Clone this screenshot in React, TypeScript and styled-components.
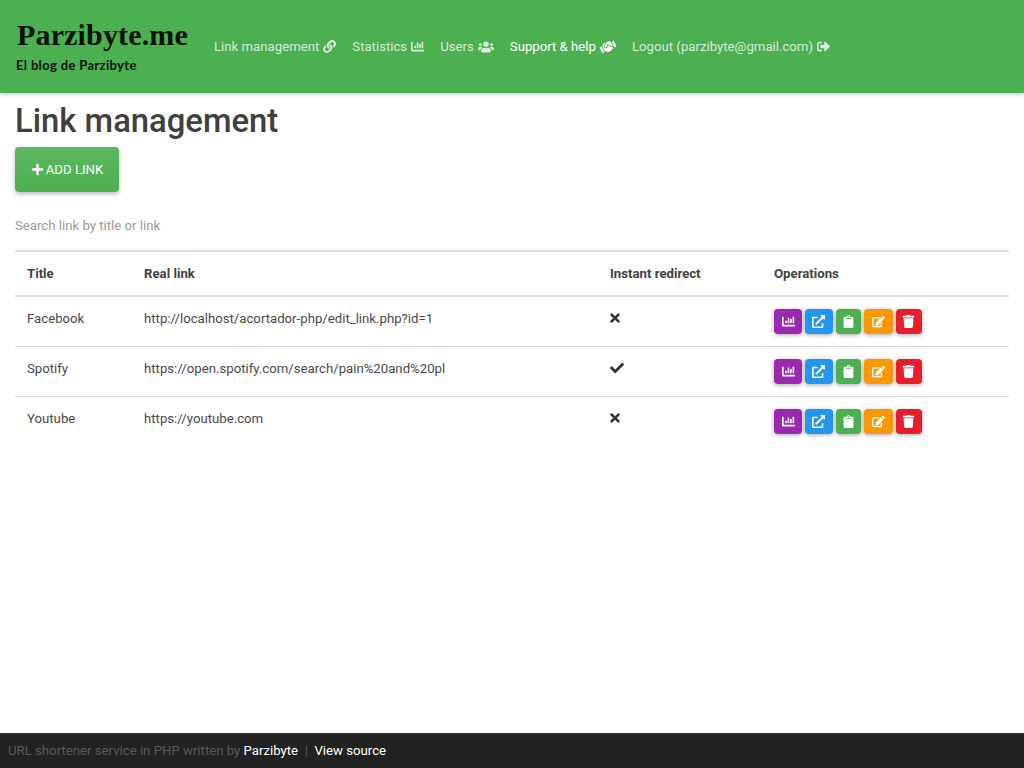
import React from "react";
import styled, { createGlobalStyle } from "styled-components";
import { FaLink, FaChartBar, FaUsers, FaHandshake, FaSignOutAlt, FaPlus, FaTimes, FaCheck, FaExternalLinkAlt, FaClipboard, FaEdit, FaTrash } from "react-icons/fa";

const Global = createGlobalStyle`
  html, body { margin: 0; padding: 0; background: #fff; }
  body { font-family: Roboto, "Liberation Sans", sans-serif; font-size: 13.2px; color: #333; }
  #root { min-height: 768px; }
`;
const Page = styled.div`
  height: 768px;
  display: flex;
  flex-direction: column;
  overflow: hidden;
`;
const Header = styled.header`
  height: 93px;
  flex: none;
  background: #4caf50;
  box-shadow: 0 1px 4px rgba(0,0,0,.25);
  display: flex;
  align-items: center;
  padding-left: 17px;
  position: relative;
`;
const Brand = styled.div`
  width: 189px;
  flex: none;
  display: flex;
  flex-direction: column;
  color: #0a120a;
  margin-top: -1px;
`;
const BrandName = styled.div`
  font-family: "Liberation Serif", serif;
  font-weight: 700;
  font-size: 30px;
  line-height: 34px;
  letter-spacing: 0.15px;
  white-space: nowrap;
`;
const Tagline = styled.div`
  font-family: "Lato", sans-serif;
  font-weight: 700;
  font-size: 13px;
  line-height: 18px;
  margin-top: 4px;
  margin-left: -1px;
  letter-spacing: .35px;
`;
const Nav = styled.nav`
  display: flex;
  align-items: center;
  gap: 16px;
  margin-left: 8px;
`;
const NavItem = styled.a<{ $active?: boolean }>`
  display: inline-flex;
  align-items: center;
  gap: 4px;
  white-space: nowrap;
  font-size: 13.2px;
  color: ${p => (p.$active ? "#fff" : "rgba(255,255,255,.78)")};
  svg { font-size: 13px; }
`;
const UsersIcon = styled(FaUsers)`
  && { font-size: 16px; }
`;
const HandIcon = styled(FaHandshake)`
  && { font-size: 16px; }
  transform: rotate(-25deg);
`;
const Main = styled.main`
  flex: 1;
  padding: 0 15px;
`;
const Title = styled.h1`
  margin: 8px 0 0;
  font-size: 32.8px;
  font-weight: 500;
  line-height: 40px;
  color: #404040;
`;
const AddButton = styled.button`
  margin-top: 6px;
  width: 104px;
  height: 45px;
  display: flex;
  align-items: center;
  justify-content: center;
  gap: 2px;
  border: 0;
  border-radius: 4px;
  background: linear-gradient(#5cb860, #4caf50);
  box-shadow: 0 2px 5px rgba(0,0,0,.28);
  color: #fff;
  font-family: inherit;
  font-size: 13.2px;
  padding: 0;
  svg { font-size: 13px; }
`;
const SearchRow = styled.div`
  height: 60px;
  display: flex;
  align-items: center;
  font-size: 13.2px;
  color: #9a9a9a;
  padding-top: 8px;
  box-sizing: border-box;
  border-bottom: 2px solid #ddd;
`;
const Table = styled.table`
  width: 994px;
  border-collapse: collapse;
  table-layout: fixed;
`;
const Th = styled.th<{ $w: number }>`
  width: ${p => p.$w}px;
  box-sizing: border-box;
  height: 44px;
  padding: 0 12px;
  text-align: left;
  font-weight: 700;
  font-size: 13.2px;
  color: #424242;
  border-bottom: 2px solid #ddd;
`;
const Row = styled.tr`
  height: 50px;
  border-bottom: 1px solid #ddd;
  &:last-child { border-bottom: 0; }
`;
const Td = styled.td`
  padding: 12px 12px 0;
  vertical-align: top;
  font-size: 13.2px;
  line-height: 20px;
  color: #4a4a4a;
`;
const Mark = styled.span`
  display: flex;
  color: #333;
  font-size: 14px;
  height: 18px;
  align-items: center;
`;
const CrossIcon = styled(FaTimes)`
  margin-left: -2px;
`;
const Ops = styled.div`
  display: flex;
  gap: 3px;
`;
const Op = styled.button<{ $bg: string; $w: number }>`
  width: ${p => p.$w}px;
  height: 25px;
  border: 0;
  padding: 0;
  border-radius: 4px;
  background: ${p => p.$bg};
  color: #fff;
  display: flex;
  align-items: center;
  justify-content: center;
  font-size: 13px;
  box-shadow: 0 1px 4px rgba(0,0,0,.35);
`;
const Footer = styled.footer`
  height: 35px;
  flex: none;
  background: #222;
  border-top: 1px solid #333;
  box-sizing: border-box;
  display: flex;
  align-items: center;
  padding: 0 0 2px 8px;
  font-size: 13.2px;
  color: #5a5a5a;
  white-space: pre;
`;
const FooterLink = styled.a`
  color: #fff;
`;

const rows = [
  ["Facebook", "http://localhost/acortador-php/edit_link.php?id=1", false],
  ["Spotify", "https://open.spotify.com/search/pain%20and%20pl", true],
  ["Youtube", "https://youtube.com", false],
] as const;

export default function App() {
  return (
    <Page>
      <Global />
      <Header>
        <Brand>
          <BrandName>Parzibyte.me</BrandName>
          <Tagline>El blog de Parzibyte</Tagline>
        </Brand>
        <Nav>
          <NavItem>Link management <FaLink /></NavItem>
          <NavItem>Statistics <FaChartBar /></NavItem>
          <NavItem>Users <UsersIcon /></NavItem>
          <NavItem $active>Support &amp; help <HandIcon /></NavItem>
          <NavItem>Logout (parzibyte@gmail.com) <FaSignOutAlt /></NavItem>
        </Nav>
      </Header>
      <Main>
        <Title>Link management</Title>
        <AddButton><FaPlus /> ADD LINK</AddButton>
        <SearchRow>Search link by title or link</SearchRow>
        <Table>
          <thead>
            <tr>
              <Th $w={117}>Title</Th>
              <Th $w={466}>Real link</Th>
              <Th $w={164}>Instant redirect</Th>
              <Th $w={247}>Operations</Th>
            </tr>
          </thead>
          <tbody>
            {rows.map(([t, l, ok]) => (
              <Row key={t}>
                <Td>{t}</Td>
                <Td>{l}</Td>
                <Td><Mark>{ok ? <FaCheck /> : <CrossIcon />}</Mark></Td>
                <Td>
                  <Ops>
                    <Op $bg="#9c27b0" $w={28}><FaChartBar /></Op>
                    <Op $bg="#2196f3" $w={27.5}><FaExternalLinkAlt /></Op>
                    <Op $bg="#4caf50" $w={25}><FaClipboard /></Op>
                    <Op $bg="#ff9800" $w={29}><FaEdit /></Op>
                    <Op $bg="#e91e2c" $w={26.5}><FaTrash /></Op>
                  </Ops>
                </Td>
              </Row>
            ))}
          </tbody>
        </Table>
      </Main>
      <Footer>URL shortener service in PHP written by <FooterLink>Parzibyte</FooterLink>  |  <FooterLink>View source</FooterLink></Footer>
    </Page>
  );
}
